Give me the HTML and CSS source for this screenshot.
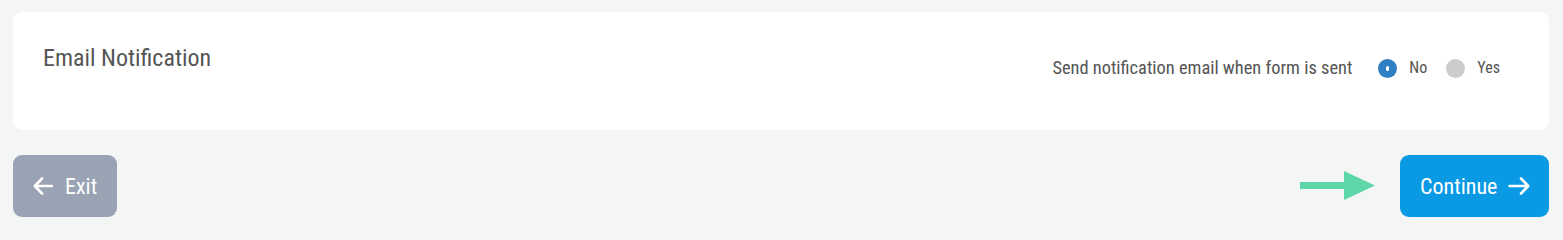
FILE: index.html
```html
<!DOCTYPE html>
<html>
<head>
<meta charset="utf-8">
<link rel="stylesheet" href="styles.css">
</head>
<body>
<div class="page">
  <section class="card">
    <h2 class="title">Email Notification</h2>
    <div class="option">
      <span class="label">Send notification email when form is sent</span>
      <label class="radio"><span class="dot on"></span><span class="rtext">No</span></label>
      <label class="radio"><span class="dot"></span><span class="rtext">Yes</span></label>
    </div>
  </section>
  <div class="actions">
    <button class="btn exit">
      <svg class="ico" width="20" height="18" viewBox="0 0 20 18"><path d="M19 9H2M9 1.5 1.8 9 9 16.5" fill="none" stroke="#fff" stroke-width="2.6" stroke-linecap="round" stroke-linejoin="round"/></svg>
      <span>Exit</span>
    </button>
    <div class="right">
      <svg class="hint" width="76" height="30" viewBox="0 0 76 30"><rect x="0" y="11" width="45" height="7" fill="#5dd6a8"/><polygon points="44,0 75,14.5 44,29" fill="#5dd6a8"/></svg>
      <button class="btn continue">
        <span>Continue</span>
        <svg class="ico" width="22" height="18" viewBox="0 0 22 18"><path d="M1.5 9H20M13 1.5 20.2 9 13 16.5" fill="none" stroke="#fff" stroke-width="2.6" stroke-linecap="round" stroke-linejoin="round"/></svg>
      </button>
    </div>
  </div>
</div>
</body>
</html>
```
FILE: styles.css
```css
html, body {
  margin: 0;
  padding: 0;
  background: #f4f5f5;
}
body {
  font-family: "Roboto Condensed", Roboto, "Liberation Sans", sans-serif;
  font-stretch: condensed;
  color: #555555;
}
.page {
  padding: 12px 14px 0 13px;
}
.card {
  background: #ffffff;
  border-radius: 9px;
  height: 118px;
  box-sizing: border-box;
  padding: 0 49px 0 30px;
  display: flex;
  justify-content: space-between;
  align-items: flex-start;
}
.title {
  margin: 31px 0 0 0;
  font-size: 24px;
  font-weight: 400;
  line-height: 30px;
  color: #555555;
}
.option {
  margin-top: 44px;
  display: flex;
  align-items: center;
  font-size: 18.4px;
  line-height: 24px;
}
.label {
  margin-right: 26px;
}
.radio {
  display: flex;
  align-items: center;
  font-size: 16px;
}
.radio + .radio {
  margin-left: 19px;
}
.dot {
  width: 19px;
  height: 19px;
  border-radius: 50%;
  background: #cccccc;
  margin-right: 12px;
  position: relative;
}
.dot.on {
  background: #2f7fc5;
}
.dot.on::after {
  content: "";
  position: absolute;
  left: 8px;
  top: 7px;
  width: 3px;
  height: 5px;
  border-radius: 2px;
  background: #ffffff;
}
.actions {
  margin-top: 25px;
  display: flex;
  justify-content: space-between;
  align-items: center;
}
.right {
  display: flex;
  align-items: center;
}
.hint {
  margin-right: 24px;
}
.btn {
  border: 0;
  height: 62px;
  border-radius: 9px;
  color: #ffffff;
  font-family: inherit;
  font-stretch: condensed;
  font-size: 22px;
  font-weight: 400;
  display: flex;
  align-items: center;
  cursor: pointer;
}
.exit {
  background: #9aa3b3;
  width: 104px;
  padding: 0 0 0 20px;
  gap: 12px;
}
.continue {
  background: #0a9ae3;
  width: 149px;
  padding: 0 0 0 20px;
  gap: 11px;
}
```
